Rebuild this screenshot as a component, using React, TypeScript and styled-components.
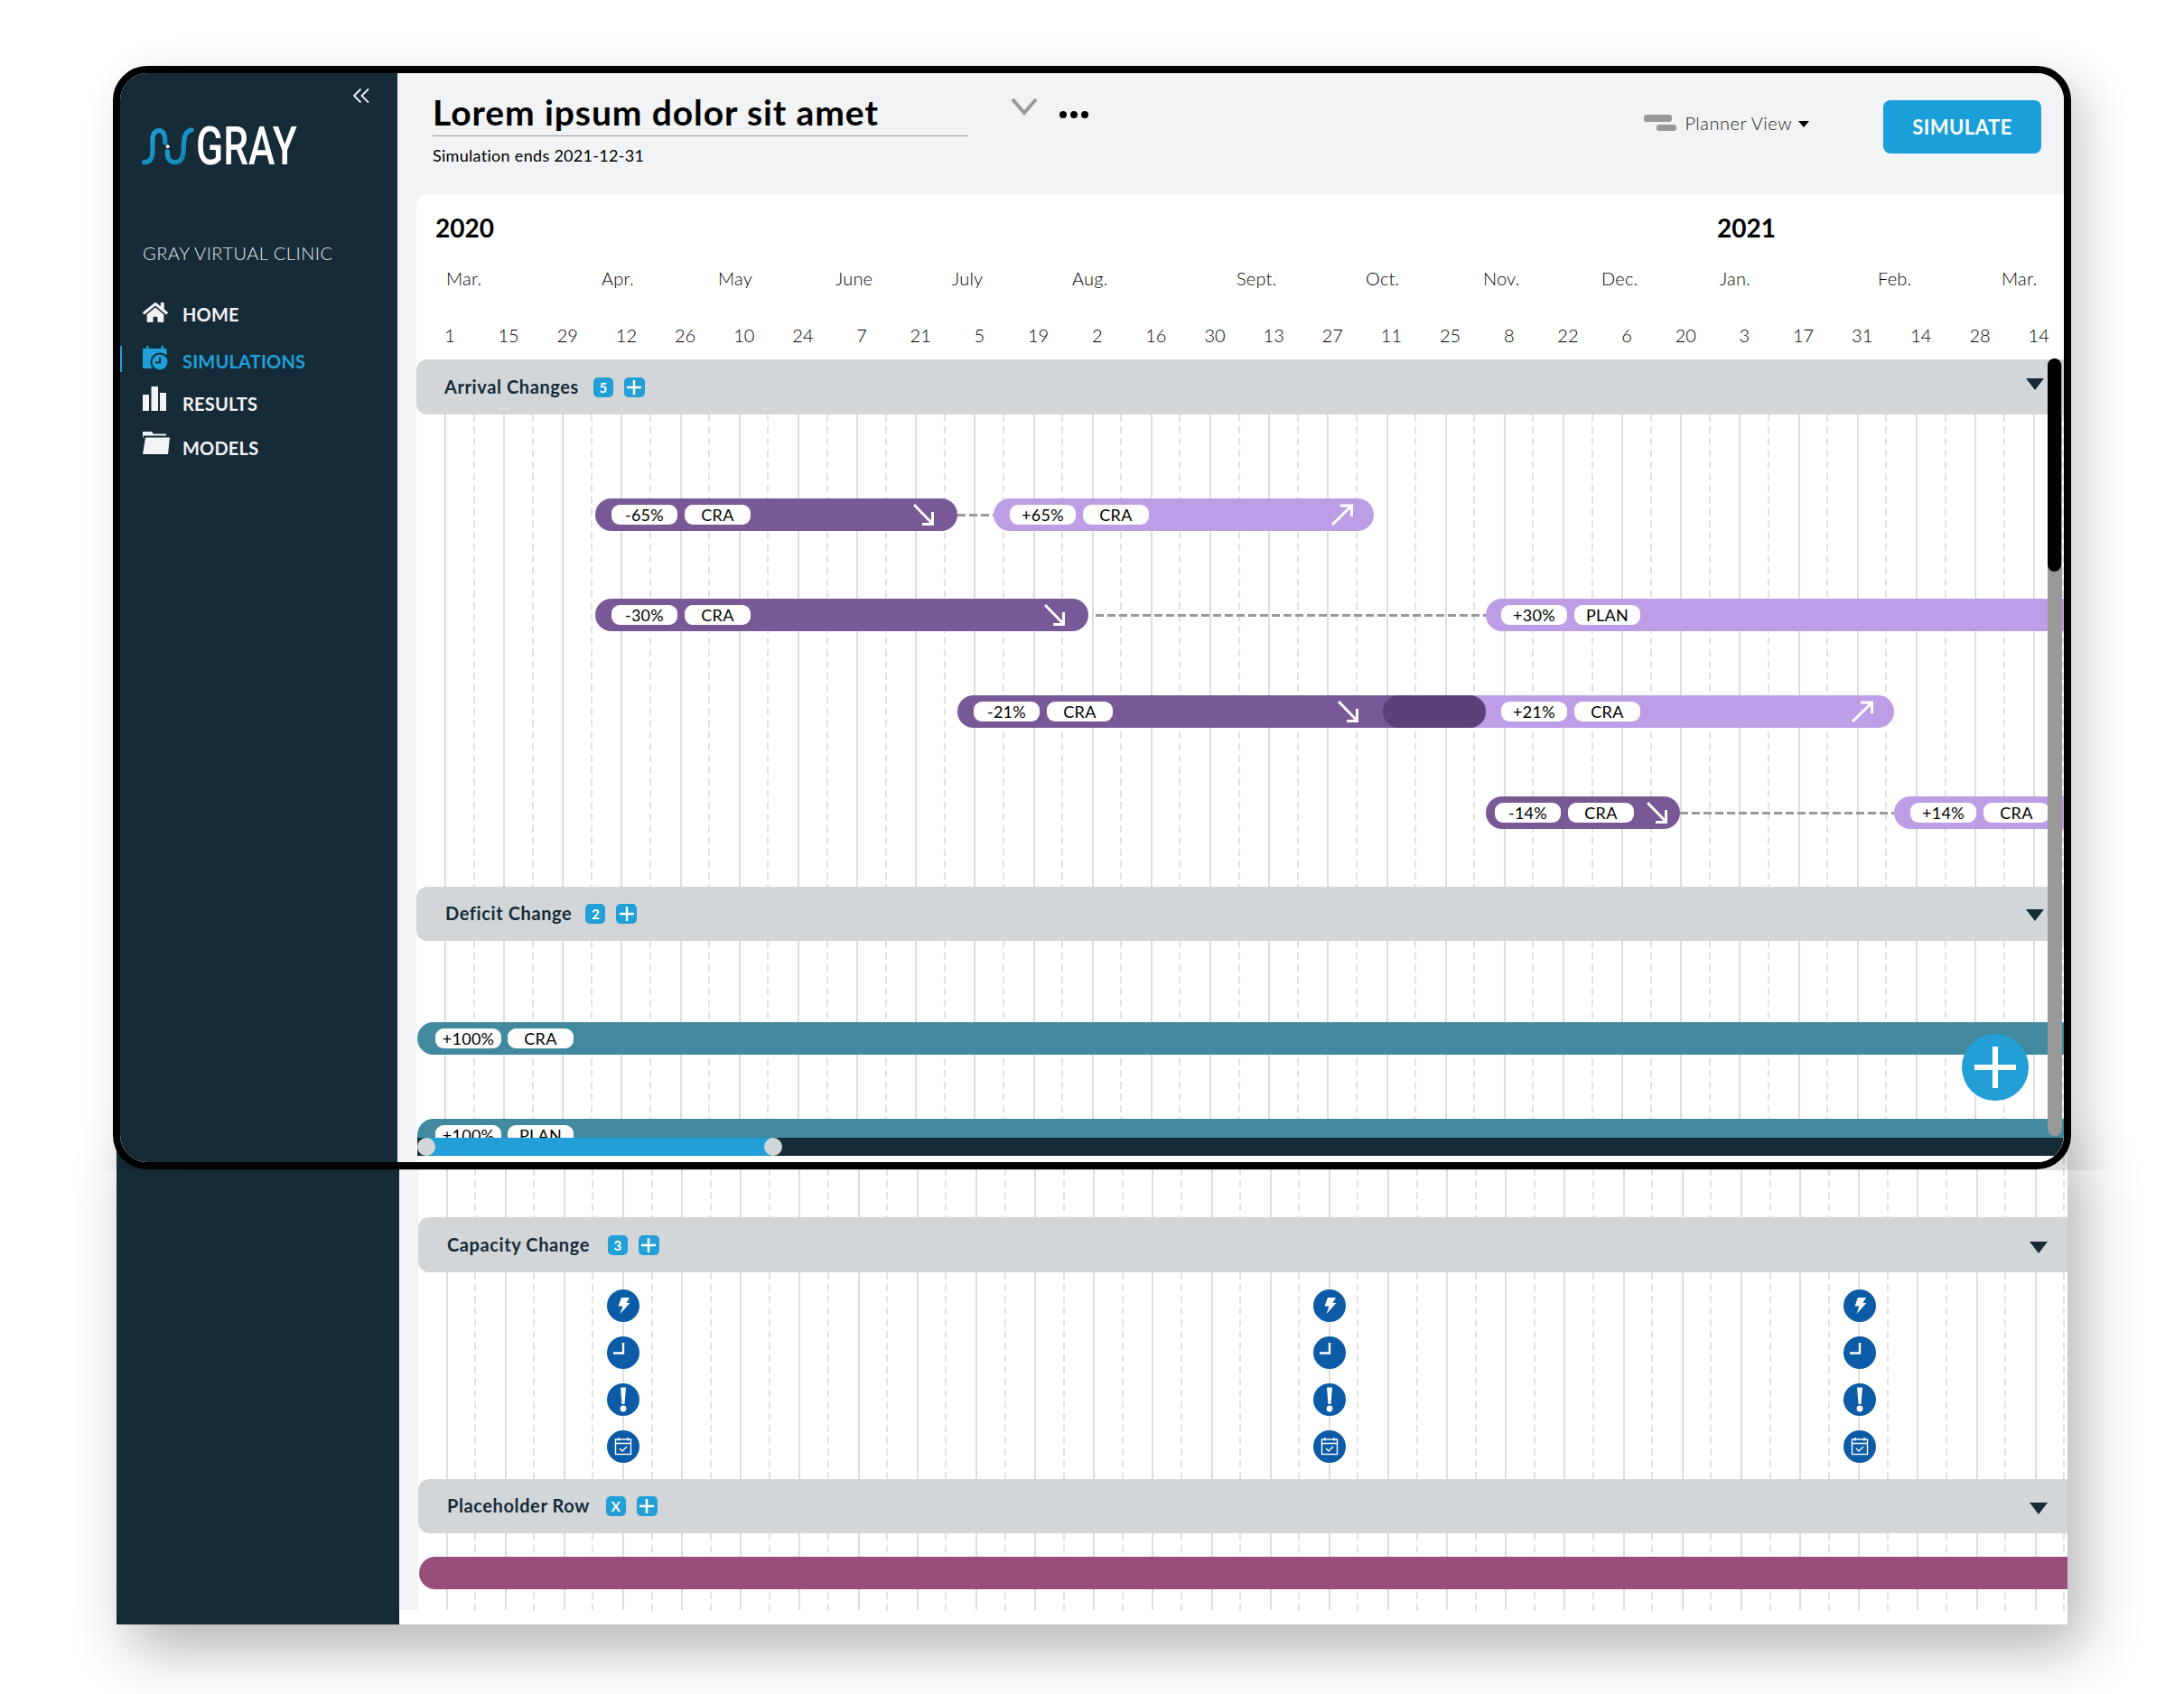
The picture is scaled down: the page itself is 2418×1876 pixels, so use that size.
import React from "react";
import styled, { createGlobalStyle } from "styled-components";
import { FaHome } from "react-icons/fa";

const FONT = `"Lato", "Noto Sans", "Liberation Sans", sans-serif`;
const INK = "#152b38";
const BLUE = "#219fd6";
const COL = 65.16;

const Global = createGlobalStyle`
  html, body { margin: 0; padding: 0; background: #fff; width: 2418px; height: 1876px; overflow: hidden; }
  body { font-family: ${FONT}; color: #000; }
  * { box-sizing: border-box; }
`;

const Page = styled.div`
  padding: 73px 0 0 125px;
  display: flex;
  flex-direction: column;
`;
const Device = styled.div`
  position: relative;
  z-index: 1;
  width: 2168px;
  height: 1222px;
  border: 8px solid #000;
  border-radius: 38px;
  overflow: hidden;
  display: flex;
  background: #fff;
  box-shadow: 16px 16px 50px rgba(0, 0, 0, 0.2);
  clip-path: inset(-90px -90px -1px -90px round 0 0 38px 38px);
`;
const Sidebar = styled.aside<{ $w: number }>`
  flex: none;
  width: ${(p) => p.$w}px;
  background: ${INK};
  display: flex;
  flex-direction: column;
  position: relative;
`;
const Collapse = styled.div`
  align-self: flex-end;
  margin: 13px 30px 0 0;
  height: 24px;
  color: #f2f3f5;
  display: flex;
`;
const LogoRow = styled.div`
  display: flex;
  align-items: center;
  margin: 23px 0 0 24px;
  height: 42px;
`;
const LogoText = styled.span`
  display: inline-block;
  font-family: "Roboto", sans-serif;
  font-size: 59px;
  line-height: 42px;
  color: #fff;
  font-weight: 500;
  transform: scaleX(0.75);
  transform-origin: left center;
  margin-left: 2px;
`;
const ClinicLabel = styled.div`
  margin: 85px 0 0 25px;
  font-size: 20px;
  line-height: 24px;
  font-weight: 300;
  letter-spacing: 0.5px;
  color: #e3e7ea;
  white-space: nowrap;
`;
const NavList = styled.nav`
  margin-top: 40px;
  display: flex;
  flex-direction: column;
`;
const NavItem = styled.div<{ $h: number; $active?: boolean }>`
  position: relative;
  height: ${(p) => p.$h}px;
  padding-left: 25px;
  display: flex;
  color: ${(p) => (p.$active ? "#1fa0d8" : "#f2f3f5")};
`;
const NavIcon = styled.span`
  flex: none;
  width: 44px;
  display: block;
  line-height: 0;
`;
const NavLabel = styled.span<{ $dy: number }>`
  margin-top: ${(p) => p.$dy}px;
  font-size: 20px;
  line-height: 24px;
  font-weight: 700;
  letter-spacing: 0.2px;
`;
const ActiveMark = styled.span`
  position: absolute;
  left: 0;
  top: 0;
  width: 2px;
  height: 29px;
  background: #1fa0d8;
`;
const Main = styled.main`
  flex: 1;
  min-width: 0;
  background: #f2f3f5;
  display: flex;
  flex-direction: column;
`;
const TopBar = styled.header`
  flex: none;
  height: 134px;
  display: flex;
  align-items: flex-start;
  padding: 0 25px 0 40px;
`;
const TitleBlock = styled.div`
  width: 592px;
  padding-top: 22px;
`;
const Title = styled.h1`
  margin: 0;
  height: 48px;
  border-bottom: 1.5px solid #999;
  font-size: 39px;
  line-height: 42px;
  letter-spacing: 0.9px;
  margin-left: -1px;
  font-weight: 700;
  white-space: nowrap;
  color: #000;
`;
const Subtitle = styled.div`
  margin-top: 9px;
  margin-left: -1px;
  font-size: 18px;
  line-height: 24px;
  letter-spacing: 0.3px;
  white-space: nowrap;
`;
const Chevron = styled.svg`
  margin: 27px 0 0 46px;
  flex: none;
`;
const Dots = styled.svg`
  margin: 41px 0 0 22px;
  flex: none;
`;
const PlannerBox = styled.div`
  margin: 43px 0 0 auto;
  display: flex;
  align-items: center;
  height: 24px;
`;
const PlannerText = styled.span`
  margin-left: 9px;
  font-size: 20px;
  font-weight: 300;
  letter-spacing: 0.5px;
  color: #222;
`;
const Caret = styled.span`
  margin: 3px 0 0 7px;
  width: 0;
  height: 0;
  border-left: 6.5px solid transparent;
  border-right: 6.5px solid transparent;
  border-top: 7px solid #000;
`;
const SimButton = styled.button`
  margin: 30px 0 0 82px;
  width: 175px;
  height: 59px;
  border: 0;
  border-radius: 8px;
  background: #1a9fd8;
  color: #fff;
  font-family: ${FONT};
  font-size: 22px;
  font-weight: 700;
  letter-spacing: 0.5px;
`;
const Panel = styled.section`
  position: relative;
  flex: 1;
  min-height: 0;
  margin-left: 21px;
  background: #fff;
  border-radius: 12px 0 0 0;
  overflow: hidden;
  display: flex;
  flex-direction: column;
`;
const TimelineHead = styled.div`
  flex: none;
  height: 183px;
`;
const YearRow = styled.div`
  padding: 21px 0 0 21px;
  display: flex;
  height: 53px;
`;
const Year = styled.div<{ $w: number }>`
  width: ${(p) => p.$w}px;
  font-size: 28px;
  line-height: 32px;
  font-weight: 700;
`;
const MonthRow = styled.div`
  display: flex;
  height: 24px;
  margin-top: 28px;
  padding-left: 33px;
`;
const Month = styled.div<{ $w: number }>`
  flex: none;
  width: ${(p) => p.$w}px;
  font-size: 20px;
  line-height: 24px;
  font-weight: 300;
  letter-spacing: 0.2px;
`;
const DayRow = styled.div`
  display: flex;
  height: 24px;
  margin-top: 39px;
  padding-left: 4.4px;
`;
const Day = styled.div`
  flex: none;
  width: ${COL}px;
  text-align: center;
  font-size: 20px;
  line-height: 24px;
  font-weight: 300;
`;
const SectionHeader = styled.div<{ $h: number; $gap: number; $pad: number }>`
  position: relative;
  z-index: 1;
  flex: none;
  height: ${(p) => p.$h}px;
  background: #d3d6d9;
  border-radius: 12px 0 0 12px;
  padding-left: ${(p) => p.$pad}px;
  display: flex;
  align-items: center;
  & > b {
    margin-right: ${(p) => p.$gap}px;
  }
`;
const SectionName = styled.b`
  font-size: 20px;
  line-height: 24px;
  margin-top: -2px;
  font-weight: 700;
  letter-spacing: 0.6px;
  color: ${INK};
  white-space: nowrap;
`;
const Badge = styled.span`
  flex: none;
  width: 22px;
  height: 22px;
  border-radius: 5px;
  background: ${BLUE};
  color: #fff;
  font-size: 15px;
  font-weight: 700;
  text-align: center;
  line-height: 22px;
`;
const AddTag = styled(Badge)`
  width: 23px;
  margin-left: 12px;
  display: flex;
  align-items: center;
  justify-content: center;
`;
const Collapser = styled.span<{ $dy: number }>`
  margin: ${(p) => p.$dy}px 22px 0 auto;
  width: 0;
  height: 0;
  border-left: 10.5px solid transparent;
  border-right: 10.5px solid transparent;
  border-top: 13px solid ${INK};
`;
const Lane = styled.div<{ $h: number }>`
  position: relative;
  flex: none;
  height: ${(p) => p.$h}px;
  overflow: hidden;
`;
const GridLayer = styled.div<{ $x: number }>`
  position: absolute;
  inset: 0;
  display: flex;
  padding-left: ${(p) => p.$x}px;
`;
const GridCol = styled.div<{ $tail: number }>`
  flex: none;
  width: ${COL}px;
  height: 100%;
  background-image: linear-gradient(#dedede, #dedede), linear-gradient(#e2e2e2 8px, transparent 8px);
  background-size: 2px calc(100% - ${(p) => p.$tail}px), 2px 13px;
  background-position: 0 0, 31.6px 0;
  background-repeat: no-repeat, repeat-y;
`;
const BarRow = styled.div<{ $top: number; $x?: number }>`
  position: relative;
  display: flex;
  align-items: center;
  height: 36px;
  margin-top: ${(p) => p.$top}px;
  margin-left: ${(p) => p.$x ?? 0}px;
`;
const Bar = styled.div<{ $w: number; $bg: string; $pad?: number; $gap?: number; $open?: boolean; $under?: number; $over?: boolean }>`
  position: relative;
  z-index: ${(p) => (p.$over ? 1 : 0)};
  flex: none;
  width: ${(p) => p.$w}px;
  height: 36px;
  background: ${(p) => p.$bg};
  border-radius: ${(p) => (p.$open ? "18px 0 0 18px" : "18px")};
  display: flex;
  align-items: center;
  gap: ${(p) => p.$gap ?? 8}px;
  padding-left: ${(p) => p.$pad ?? 18}px;
  margin-left: ${(p) => p.$under ?? 0}px;
`;
const Overlap = styled.div`
  position: absolute;
  right: 0;
  top: 0;
  width: 114px;
  height: 36px;
  border-radius: 18px;
  background: #5d4079;
`;
const Pill = styled.span`
  flex: none;
  width: 73px;
  height: 22px;
  border-radius: 9px;
  background: #fff;
  color: #000;
  font-size: 18px;
  line-height: 22px;
  letter-spacing: 0.3px;
  text-align: center;
  font-weight: 400;
  white-space: nowrap;
`;
const TrendIcon = styled.svg<{ $mr: number }>`
  flex: none;
  margin-left: auto;
  margin-right: ${(p) => p.$mr}px;
`;
const Connector = styled.div<{ $w: number; $ml?: number }>`
  flex: none;
  width: ${(p) => p.$w}px;
  margin-left: ${(p) => p.$ml ?? 0}px;
  height: 3px;
  background: repeating-linear-gradient(90deg, #999 0 9px, transparent 9px 13px);
`;
const Slider = styled.div`
  position: relative;
  flex: none;
  height: 20px;
  margin: 0 0 7px 1px;
  background: ${INK};
`;
const SliderFill = styled.div<{ $w: number }>`
  position: absolute;
  left: 10px;
  top: 0;
  height: 20px;
  width: ${(p) => p.$w}px;
  background: ${BLUE};
`;
const SliderHandle = styled.span<{ $at: number }>`
  position: absolute;
  top: 0;
  left: ${(p) => p.$at}px;
  width: 20px;
  height: 20px;
  border-radius: 50%;
  background: #d3d6d9;
`;
const ScrollTrack = styled.div`
  position: absolute;
  z-index: 2;
  right: 2px;
  top: 182px;
  width: 16px;
  height: 861px;
  border-radius: 8px;
  background: #999;
`;
const ScrollThumb = styled.div`
  width: 15px;
  height: 236px;
  border-radius: 8px;
  background: #000;
`;
const Fab = styled.div`
  position: absolute;
  z-index: 1;
  right: 39px;
  bottom: 68px;
  width: 74px;
  height: 74px;
  border-radius: 50%;
  background: ${BLUE};
  display: flex;
  align-items: center;
  justify-content: center;
`;
const Backdrop = styled.div`
  flex: none;
  width: 2160px;
  height: 544px;
  margin: -40px 0 0 4px;
  display: flex;
  background: #fff;
  box-shadow: 16px 26px 60px rgba(0, 0, 0, 0.3);
`;
const Strip = styled.div`
  flex: none;
  width: 21px;
  height: 528px;
  background: #f2f3f5;
`;
const LowerPanel = styled.section`
  flex: 1;
  min-width: 0;
  display: flex;
  flex-direction: column;
  overflow: hidden;
`;
const IconLane = styled.div`
  position: relative;
  display: flex;
  padding: 19px 0 0 209px;
  height: 100%;
`;
const IconStack = styled.div<{ $ml: number }>`
  display: flex;
  flex-direction: column;
  gap: 16px;
  margin-left: ${(p) => p.$ml}px;
`;
const CircleIcon = styled.svg`
  display: block;
`;

const days = [1, 15, 29, 12, 26, 10, 24, 7, 21, 5, 19, 2, 16, 30, 13, 27, 11, 25, 8, 22, 6, 20, 3, 17, 31, 14, 28, 14];
const months: [string, number][] = [
  ["Mar.", 172], ["Apr.", 129], ["May", 130], ["June", 129], ["July", 133], ["Aug.", 182], ["Sept.", 143],
  ["Oct.", 130], ["Nov.", 131], ["Dec.", 131], ["Jan.", 175], ["Feb.", 137], ["Mar.", 60],
];

const Grid = ({ x, tail = 0 }: { x: number; tail?: number }) => (
  <GridLayer $x={x}>
    {days.map((_, i) => (
      <GridCol key={i} $tail={tail} />
    ))}
  </GridLayer>
);

const Down = ({ mr = 25 }: { mr?: number }) => (
  <TrendIcon $mr={mr} width="24" height="24" viewBox="0 0 24 24" fill="none" stroke="#fff" strokeWidth="3">
    <path d="M1 1 L21 21.5 M21.5 9 V22.5 H10" />
  </TrendIcon>
);
const Up = ({ mr = 23 }: { mr?: number }) => (
  <TrendIcon $mr={mr} width="24" height="24" viewBox="0 0 24 24" fill="none" stroke="#fff" strokeWidth="3">
    <path d="M1 23 L22 2.5 M10 2 H22.5 V14" />
  </TrendIcon>
);
const Cross = ({ s, w }: { s: number; w: number }) => (
  <svg width={s} height={s} viewBox={`0 0 ${s} ${s}`}>
    <path d={`M${s / 2} 0 V${s} M0 ${s / 2} H${s}`} stroke="#fff" strokeWidth={w} />
  </svg>
);
const Section = ({ name, count, h, gap, pad = 31, dy }: { name: string; count: string; h: number; gap: number; pad?: number; dy: number }) => (
  <SectionHeader $h={h} $gap={gap} $pad={pad}>
    <SectionName>{name}</SectionName>
    <Badge>{count}</Badge>
    <AddTag>
      <Cross s={16} w={2.5} />
    </AddTag>
    <Collapser $dy={dy} />
  </SectionHeader>
);

const Logo = () => (
  <svg width="58" height="42" viewBox="170 270 172 128" fill="none">
    <defs>
      <linearGradient id="lg" x1="0" y1="0" x2="1" y2="1">
        <stop offset="0" stopColor="#1fa6dc" />
        <stop offset="1" stopColor="#0e7fae" />
      </linearGradient>
    </defs>
    <path d="M176 388 C196 388 204 372 204 350 V312 C204 290 214 281 226 281 C238 281 246 292 246 312 V322" stroke="url(#lg)" strokeWidth="16" strokeLinecap="round" />
    <path d="M254 352 V358 C254 378 266 388 280 388 C296 388 306 376 308 352 L310 315 C312 292 322 281 336 279" stroke="url(#lg)" strokeWidth="16" strokeLinecap="round" />
    <circle cx="255" cy="335" r="6" fill="#fff" />
  </svg>
);
const SimIcon = () => (
  <svg width="28" height="28" viewBox="0 0 28 28">
    <path d="M4 0h2.5v3h14V0H23v3h3.5v22H0V3h4z" fill="#1fa0d8" />
    <circle cx="19" cy="18" r="9.5" fill="#1fa0d8" stroke="#152b38" strokeWidth="2" />
    <path d="M19 12.5V18.5H14" stroke="#152b38" strokeWidth="2" fill="none" />
  </svg>
);
const ResultsIcon = () => (
  <svg width="26" height="27" viewBox="0 0 26 27" fill="#f2f3f5">
    <rect x="0" y="9" width="7" height="18" />
    <rect x="9.5" y="0" width="7.5" height="27" />
    <rect x="19" y="7" width="7" height="20" />
  </svg>
);
const FolderIcon = () => (
  <svg width="30" height="25" viewBox="0 0 30 25" fill="#f2f3f5">
    <path d="M0 0H10L12 2.5H26V4.5H1L0 8z" />
    <path d="M3 6.5H30L28 25H0z" />
  </svg>
);
const Bolt = () => (
  <CircleIcon width="36" height="36" viewBox="0 0 36 36">
    <circle cx="18" cy="18" r="18" fill="#0b5ba6" />
    <path d="M16 9H25L21.5 15H25.5L14.5 27L17.5 18.5H12.5z" fill="#fff" />
  </CircleIcon>
);
const Clock = () => (
  <CircleIcon width="36" height="36" viewBox="0 0 36 36">
    <circle cx="18" cy="18" r="18" fill="#0b5ba6" />
    <path d="M7 18.5H18V7" fill="none" stroke="#fff" strokeWidth="2.4" />
  </CircleIcon>
);
const Alert = () => (
  <CircleIcon width="36" height="36" viewBox="0 0 36 36">
    <circle cx="18" cy="18" r="18" fill="#0b5ba6" />
    <path d="M15 4.5H21L19.5 23H16.5z" fill="#fff" />
    <circle cx="18" cy="28" r="3.4" fill="#fff" />
  </CircleIcon>
);
const CalCheck = () => (
  <CircleIcon width="36" height="36" viewBox="0 0 36 36">
    <circle cx="18" cy="18" r="18" fill="#0b5ba6" />
    <rect x="9.5" y="10" width="17" height="16.5" fill="none" stroke="#fff" strokeWidth="1.4" />
    <path d="M9.5 14.5H26.5M13 8V11.5M23 8V11.5" stroke="#fff" strokeWidth="1.4" />
    <path d="M14 20L17 23L22 18" fill="none" stroke="#fff" strokeWidth="1.4" />
  </CircleIcon>
);
const Stack = ({ ml }: { ml: number }) => (
  <IconStack $ml={ml}>
    <Bolt />
    <Clock />
    <Alert />
    <CalCheck />
  </IconStack>
);

const DARK = "#795898";
const LIGHT = "#bd9ee6";
const TEAL = "#40899f";
const PLUM = "#984e7a";

export default function App() {
  return (
    <>
      <Global />
      <Page>
        <Device>
          <Sidebar $w={307}>
            <Collapse>
              <svg width="20" height="24" viewBox="0 0 20 24" fill="none" stroke="currentColor" strokeWidth="1.8">
                <path d="M9.5 4.5L2 12L9.5 19.5M18 4.5L10.5 12L18 19.5" />
              </svg>
            </Collapse>
            <LogoRow>
              <Logo />
              <LogoText>GRAY</LogoText>
            </LogoRow>
            <ClinicLabel>GRAY VIRTUAL CLINIC</ClinicLabel>
            <NavList>
              <NavItem $h={51}>
                <NavIcon>
                  <FaHome size={28} />
                </NavIcon>
                <NavLabel $dy={4}>HOME</NavLabel>
              </NavItem>
              <NavItem $h={45} $active>
                <ActiveMark />
                <NavIcon>
                  <SimIcon />
                </NavIcon>
                <NavLabel $dy={5}>SIMULATIONS</NavLabel>
              </NavItem>
              <NavItem $h={50}>
                <NavIcon>
                  <ResultsIcon />
                </NavIcon>
                <NavLabel $dy={7}>RESULTS</NavLabel>
              </NavItem>
              <NavItem $h={40}>
                <NavIcon>
                  <FolderIcon />
                </NavIcon>
                <NavLabel $dy={6}>MODELS</NavLabel>
              </NavItem>
            </NavList>
          </Sidebar>
          <Main>
            <TopBar>
              <TitleBlock>
                <Title>Lorem ipsum dolor sit amet</Title>
                <Subtitle>Simulation ends 2021-12-31</Subtitle>
              </TitleBlock>
              <Chevron width="32" height="20" viewBox="0 0 32 20" fill="none" stroke="#999" strokeWidth="4">
                <path d="M3 2L16 17L29 2" />
              </Chevron>
              <Dots width="34" height="10" viewBox="0 0 34 10" fill="#000">
                <circle cx="5" cy="5" r="4" />
                <circle cx="17" cy="5" r="4" />
                <circle cx="29" cy="5" r="4" />
              </Dots>
              <PlannerBox>
                <svg width="36" height="18" viewBox="0 0 36 18" fill="#999">
                  <rect x="0" y="0" width="31" height="8" rx="3" />
                  <rect x="14" y="11" width="22" height="7" rx="3" />
                </svg>
                <PlannerText>Planner View</PlannerText>
                <Caret />
              </PlannerBox>
              <SimButton>SIMULATE</SimButton>
            </TopBar>
            <Panel>
              <TimelineHead>
                <YearRow>
                  <Year $w={1419}>2020</Year>
                  <Year $w={80}>2021</Year>
                </YearRow>
                <MonthRow>
                  {months.map(([m, w], i) => (
                    <Month key={i} $w={w}>
                      {m}
                    </Month>
                  ))}
                </MonthRow>
                <DayRow>
                  {days.map((d, i) => (
                    <Day key={i}>{d}</Day>
                  ))}
                </DayRow>
              </TimelineHead>
              <Section name="Arrival Changes" count="5" h={61} gap={16} dy={-6} />
              <Lane $h={523}>
                <Grid x={31} />
                <BarRow $top={93} $x={198}>
                  <Bar $w={401} $bg={DARK}>
                    <Pill>-65%</Pill>
                    <Pill>CRA</Pill>
                    <Down />
                  </Bar>
                  <Connector $w={40} />
                  <Bar $w={421} $bg={LIGHT}>
                    <Pill>+65%</Pill>
                    <Pill>CRA</Pill>
                    <Up />
                  </Bar>
                </BarRow>
                <BarRow $top={75} $x={198}>
                  <Bar $w={546} $bg={DARK}>
                    <Pill>-30%</Pill>
                    <Pill>CRA</Pill>
                    <Down />
                  </Bar>
                  <Connector $w={432} $ml={8} />
                  <Bar $w={660} $bg={LIGHT} $pad={17} $open>
                    <Pill>+30%</Pill>
                    <Pill>PLAN</Pill>
                  </Bar>
                </BarRow>
                <BarRow $top={71} $x={599}>
                  <Bar $w={585} $bg={DARK} $over>
                    <Pill>-21%</Pill>
                    <Pill>CRA</Pill>
                    <Down mr={140} />
                    <Overlap />
                  </Bar>
                  <Bar $w={566} $bg={LIGHT} $pad={131} $under={-114}>
                    <Pill>+21%</Pill>
                    <Pill>CRA</Pill>
                    <Up />
                  </Bar>
                </BarRow>
                <BarRow $top={76} $x={1184}>
                  <Bar $w={215} $bg={DARK} $pad={10}>
                    <Pill>-14%</Pill>
                    <Pill>CRA</Pill>
                    <Down mr={13} />
                  </Bar>
                  <Connector $w={237} />
                  <Bar $w={230} $bg={LIGHT} $open>
                    <Pill>+14%</Pill>
                    <Pill>CRA</Pill>
                  </Bar>
                </BarRow>
              </Lane>
              <Section name="Deficit Change" count="2" h={60} gap={15} pad={32} dy={3} />
              <Lane $h={218}>
                <Grid x={31} />
                <BarRow $top={90} $x={1}>
                  <Bar $w={1900} $bg={TEAL} $pad={20} $gap={7} $open>
                    <Pill>+100%</Pill>
                    <Pill>CRA</Pill>
                  </Bar>
                </BarRow>
                <BarRow $top={71} $x={1}>
                  <Bar $w={1900} $bg={TEAL} $pad={20} $gap={7} $open>
                    <Pill>+100%</Pill>
                    <Pill>PLAN</Pill>
                  </Bar>
                </BarRow>
              </Lane>
              <Slider>
                <SliderFill $w={385} />
                <SliderHandle $at={0} />
                <SliderHandle $at={384} />
              </Slider>
              <ScrollTrack>
                <ScrollThumb />
              </ScrollTrack>
              <Fab>
                <Cross s={46} w={6} />
              </Fab>
            </Panel>
          </Main>
        </Device>
        <Backdrop>
          <Sidebar $w={313} />
          <Strip />
          <LowerPanel>
            <Lane $h={93}>
              <Grid x={30.5} />
            </Lane>
            <Section name="Capacity Change" count="3" h={61} gap={20} pad={32} dy={6} />
            <Lane $h={229}>
              <Grid x={30.5} />
              <IconLane>
                <Stack ml={0} />
                <Stack ml={746} />
                <Stack ml={551} />
              </IconLane>
            </Lane>
            <Section name="Placeholder Row" count="X" h={60} gap={18} pad={32} dy={5} />
            <Lane $h={89}>
              <Grid x={30.5} tail={4} />
              <BarRow $top={26} $x={1}>
                <Bar $w={1900} $bg={PLUM} $open />
              </BarRow>
            </Lane>
          </LowerPanel>
        </Backdrop>
      </Page>
    </>
  );
}
